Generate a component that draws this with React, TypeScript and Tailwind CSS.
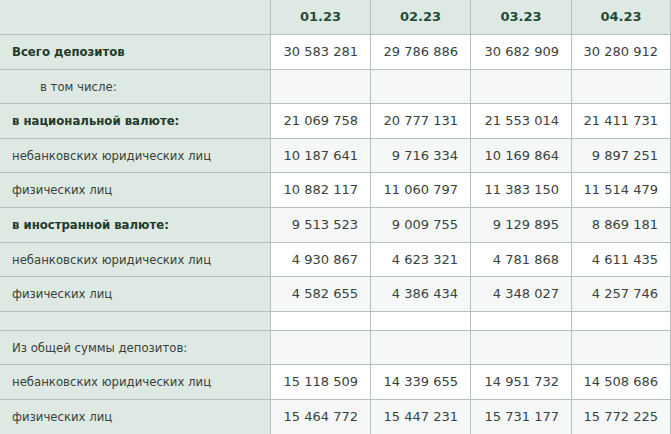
const months = ["01.23", "02.23", "03.23", "04.23"];

type Row = {
    label: string;
    values: string[];
    bold?: boolean;
    indent?: boolean;
    spacer?: boolean;
};

const rows: Row[] = [
    { label: "Всего депозитов", bold: true, values: ["30 583 281", "29 786 886", "30 682 909", "30 280 912"] },
    { label: "в том числе:", indent: true, values: ["", "", "", ""] },
    { label: "в национальной валюте:", bold: true, values: ["21 069 758", "20 777 131", "21 553 014", "21 411 731"] },
    { label: "небанковских юридических лиц", values: ["10 187 641", "9 716 334", "10 169 864", "9 897 251"] },
    { label: "физических лиц", values: ["10 882 117", "11 060 797", "11 383 150", "11 514 479"] },
    { label: "в иностранной валюте:", bold: true, values: ["9 513 523", "9 009 755", "9 129 895", "8 869 181"] },
    { label: "небанковских юридических лиц", values: ["4 930 867", "4 623 321", "4 781 868", "4 611 435"] },
    { label: "физических лиц", values: ["4 582 655", "4 386 434", "4 348 027", "4 257 746"] },
    { label: "", spacer: true, values: ["", "", "", ""] },
    { label: "Из общей суммы депозитов:", values: ["", "", "", ""] },
    { label: "небанковских юридических лиц", values: ["15 118 509", "14 339 655", "14 951 732", "14 508 686"] },
    { label: "физических лиц", values: ["15 464 772", "15 447 231", "15 731 177", "15 772 225"] },
];

const App = () => {
    return (
        <div className="h-[434px] w-[671px] overflow-hidden bg-white font-['DejaVu_Sans',Verdana,sans-serif] text-[13px] text-[#38423c]">
            <table className="-ml-px -mt-px w-[671px] table-fixed border-collapse">
                <colgroup>
                    <col className="w-[271px]" />
                    <col className="w-[100px]" />
                    <col className="w-[100px]" />
                    <col className="w-[101px]" />
                    <col className="w-[99px]" />
                </colgroup>
                <thead>
                    <tr className="h-[35px] bg-[#dfe9e3]">
                        <th className="border border-[#b3c3bc]" />
                        {months.map((m) => (
                            <th
                                key={m}
                                className="border border-[#b3c3bc] text-center font-bold text-[#1f4d38]"
                            >
                                {m}
                            </th>
                        ))}
                    </tr>
                </thead>
                <tbody>
                    {rows.map((row, i) => (
                        <tr
                            key={i}
                            className={row.spacer ? "h-[19px]" : "h-[34.6px]"}
                        >
                            <td
                                className={
                                    "border border-[#b3c3bc] bg-[#dfe9e3] font-['DejaVu_Sans_Condensed','DejaVu_Sans',sans-serif] " +
                                    (row.indent ? "pl-[40px] " : "pl-[12px] ") +
                                    (row.bold ? "font-bold text-[#1d3b2b]" : "")
                                }
                            >
                                {row.label}
                            </td>
                            {row.values.map((v, j) => (
                                <td
                                    key={j}
                                    className={
                                        "border border-[#b3c3bc] pr-[12px] text-right " +
                                        (i % 2 === 0 ? "bg-white" : "bg-[#f6f8f7]")
                                    }
                                >
                                    {v}
                                </td>
                            ))}
                        </tr>
                    ))}
                </tbody>
            </table>
        </div>
    );
};

export default App;
